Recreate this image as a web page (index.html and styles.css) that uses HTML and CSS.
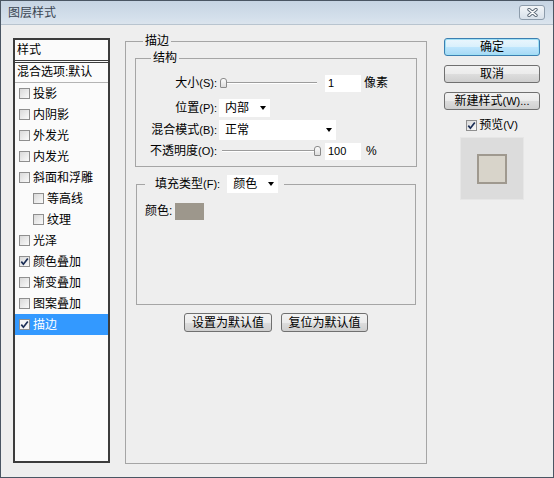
FILE: index.html
```html
<!DOCTYPE html>
<html lang="zh-CN">
<head>
<meta charset="utf-8">
<title>图层样式</title>
<link rel="stylesheet" href="styles.css">
</head>
<body>
<div class="window">
  <div class="titlebar">
    <span class="title">图层样式</span>
    <div class="close">
      <svg width="11" height="9" viewBox="0 0 11 9"><path d="M2 1.5 L9 7.5 M9 1.5 L2 7.5" stroke="#5b6876" stroke-width="3.4" stroke-linecap="round"/><path d="M2 1.5 L9 7.5 M9 1.5 L2 7.5" stroke="#ffffff" stroke-width="1.6" stroke-linecap="round"/></svg>
    </div>
  </div>
  <div class="client">
    <div class="stylelist">
      <div class="list-head">样式</div>
      <div class="list-body">
        <div class="blend-row">混合选项:默认</div>
        <div class="item"><span class="cb"></span>投影</div>
        <div class="item"><span class="cb"></span>内阴影</div>
        <div class="item"><span class="cb"></span>外发光</div>
        <div class="item"><span class="cb"></span>内发光</div>
        <div class="item"><span class="cb"></span>斜面和浮雕</div>
        <div class="item sub"><span class="cb"></span>等高线</div>
        <div class="item sub"><span class="cb"></span>纹理</div>
        <div class="item"><span class="cb"></span>光泽</div>
        <div class="item"><span class="cb"><svg width="9" height="9" viewBox="0 0 9 9"><path d="M1.3 4.6 L3.4 7.2 L7.8 1.4" stroke="#1c2f57" stroke-width="1.7" fill="none"/></svg></span>颜色叠加</div>
        <div class="item"><span class="cb"></span>渐变叠加</div>
        <div class="item"><span class="cb"></span>图案叠加</div>
        <div class="item selected"><span class="cb white"><svg width="9" height="9" viewBox="0 0 9 9"><path d="M1.3 4.6 L3.4 7.2 L7.8 1.4" stroke="#1c2f57" stroke-width="1.7" fill="none"/></svg></span>描边</div>
      </div>
    </div>

    <fieldset class="group main">
      <legend>描边</legend>
      <fieldset class="group struct">
        <legend>结构</legend>
        <div class="frow">
          <span class="flabel">大小<span class="lat">(S):</span></span>
          <div class="slider"><span class="thumb"></span></div>
          <div class="num">1</div>
          <span class="unit">像素</span>
        </div>
        <div class="frow r2">
          <span class="flabel">位置<span class="lat">(P):</span></span>
          <div class="select w51"><span>内部</span><span class="arrow"></span></div>
        </div>
        <div class="frow r3">
          <span class="flabel">混合模式<span class="lat">(B):</span></span>
          <div class="select w117 tall"><span>正常</span><span class="arrow"></span></div>
        </div>
        <div class="frow r4">
          <span class="flabel">不透明度<span class="lat">(O):</span></span>
          <div class="slider full"><span class="thumb"></span></div>
          <div class="num">100</div>
          <span class="unit pct">%</span>
        </div>
      </fieldset>
      <fieldset class="group fill">
        <legend><span>填充类型<span class="lat">(F):</span></span><div class="select w51 in-legend"><span>颜色</span><span class="arrow"></span></div></legend>
        <div class="fill-body"><span class="color-label">颜色:</span><span class="swatch"></span></div>
      </fieldset>
      <div class="defaults">
        <button class="btn w88">设置为默认值</button>
        <button class="btn w87">复位为默认值</button>
      </div>
    </fieldset>

    <div class="actions">
      <button class="btn act default">确定</button>
      <button class="btn act">取消</button>
      <button class="btn act">新建样式<span class="lat">(W)...</span></button>
      <div class="preview-row"><span class="cb"><svg width="9" height="9" viewBox="0 0 9 9"><path d="M1.3 4.6 L3.4 7.2 L7.8 1.4" stroke="#1c2f57" stroke-width="1.7" fill="none"/></svg></span>预览<span class="lat">(V)</span></div>
      <div class="preview"><div class="preview-square"></div></div>
    </div>
  </div>
</div>
</body>
</html>
```

FILE: styles.css
```css
html, body {
  margin: 0;
  padding: 0;
}
body {
  font-family: "Liberation Sans", "Noto Sans CJK SC", sans-serif;
  font-size: 12px;
  line-height: 14px;
  color: #000;
}
.lat {
  font-size: 11px;
}
.window {
  width: 554px;
  height: 478px;
  box-sizing: border-box;
  border: 1px solid #4a5663;
  display: flex;
  flex-direction: column;
  background: #eeeeee;
}
.titlebar {
  height: 23px;
  flex: none;
  display: flex;
  align-items: center;
  justify-content: space-between;
  padding: 0 8px 0 7px;
  background: linear-gradient(#c6d4e3, #d3dfeb 70%, #dbe4ed);
}
.title {
  color: #3a4552;
}
.close {
  width: 26px;
  height: 15px;
  box-sizing: border-box;
  border: 1px solid #8d9cab;
  border-radius: 3px;
  background: linear-gradient(#f2f5f8, #d8e1ea);
  display: flex;
  align-items: center;
  justify-content: center;
}
.client {
  flex: 1;
  display: flex;
  border-top: 1px solid #b8c4cf;
  padding: 9px 0 13px 12px;
}

/* left style list */
.stylelist {
  width: 97px;
  flex: none;
  box-sizing: border-box;
  margin: 4px 15px 1px 0;
  border: 2px solid #3c3c3c;
  background: #fbfbfb;
  display: flex;
  flex-direction: column;
}
.list-head {
  height: 20px;
  line-height: 20px;
  padding-left: 2px;
  border-bottom: 1px solid #3c3c3c;
}
.list-body {
  flex: 1;
  margin-top: 1px;
  border-top: 1px solid #3c3c3c;
}
.blend-row {
  height: 19px;
  line-height: 19px;
  padding-left: 2px;
  border-bottom: 1px solid #b4b4b4;
}
.item {
  height: 21px;
  display: flex;
  align-items: center;
  padding-left: 4px;
}
.item.sub {
  padding-left: 18px;
}
.item.selected {
  background: #3399ff;
  color: #fff;
}
.cb {
  width: 11px;
  height: 11px;
  flex: none;
  box-sizing: border-box;
  border: 1px solid #8f8f8f;
  background: linear-gradient(135deg, #d9d9d9, #fafafa);
  margin-right: 3px;
  display: flex;
  align-items: center;
  justify-content: center;
}
.cb.white {
  background: #f4f4f4;
}

/* group boxes */
.group {
  margin: 0;
  min-width: 0;
  border: 1px solid #a5a5a5;
}
.group > legend {
  padding: 0 2px;
  line-height: 14px;
}
.main {
  width: 302px;
  flex: none;
  box-sizing: border-box;
  padding: 3px 9px 0 9px;
  margin-right: 17px;
}
.main > legend {
  margin-left: 8px;
}
.struct {
  padding: 9px 9px 6px 10px;
}
.struct > legend {
  margin-left: 5px;
}
.frow {
  display: flex;
  align-items: center;
  height: 18px;
}
.r2 { margin-top: 7px; }
.r3 { margin-top: 3px; height: 20px; }
.r4 { margin-top: 2px; }
.flabel {
  width: 71px;
  flex: none;
  text-align: right;
}
.slider {
  width: 101px;
  height: 12px;
  margin-left: 3px;
  display: flex;
  align-items: center;
  background:
    linear-gradient(#9c9c9c, #9c9c9c) no-repeat 2px 5px / 95px 1px,
    linear-gradient(#ffffff, #ffffff) no-repeat 2px 6px / 95px 1px;
}
.slider.full {
  justify-content: flex-end;
}
.thumb {
  width: 7px;
  height: 10px;
  box-sizing: border-box;
  border: 1px solid #8a8a8a;
  border-radius: 3px 3px 1px 1px;
  background: linear-gradient(#fdfdfd, #dcdcdc);
}
.num {
  width: 36px;
  height: 17px;
  box-sizing: border-box;
  margin-left: 4px;
  padding-left: 3px;
  background: #fff;
  font-size: 11px;
  line-height: 17px;
}
.unit {
  margin-left: 3px;
}
.unit.pct {
  margin-left: 5px;
}
.select {
  height: 18px;
  box-sizing: border-box;
  margin-left: 2px;
  padding-left: 6px;
  background: #fff;
  display: flex;
  align-items: center;
}
.select.tall {
  height: 20px;
}
.w51 { width: 51px; }
.w117 { width: 117px; }
.arrow {
  margin-left: auto;
  margin-right: 4px;
  width: 0;
  height: 0;
  border-left: 3.5px solid transparent;
  border-right: 3.5px solid transparent;
  border-top: 4px solid #000;
}
.fill {
  margin: 8px 1px 0 1px;
  padding: 0 8px;
}
.fill > legend {
  display: flex;
  align-items: center;
  padding: 0 6px 0 10px;
}
.select.in-legend {
  margin-left: 7px;
}
.fill-body {
  height: 111px;
  box-sizing: border-box;
  padding-top: 10px;
  display: flex;
  align-items: flex-start;
}
.color-label {
  line-height: 17px;
}
.swatch {
  width: 29px;
  height: 17px;
  margin-left: 3px;
  background: #9d978c;
}
.defaults {
  display: flex;
  justify-content: center;
  gap: 9px;
  margin-top: 8px;
}
.btn {
  font: inherit;
  font-size: 12px;
  color: #000;
  height: 19px;
  padding: 0;
  box-sizing: border-box;
  border: 1px solid #707070;
  border-radius: 3px;
  background: linear-gradient(#f2f2f2 0%, #ebebeb 50%, #dddddd 51%, #cfcfcf 100%);
}
.w88 { width: 88px; }
.w87 { width: 87px; }

/* right column */
.actions {
  width: 96px;
  flex: none;
  align-self: flex-start;
  margin-top: 4px;
  display: flex;
  flex-direction: column;
}
.btn.act {
  height: 18px;
  width: 96px;
  margin-bottom: 9px;
}
.btn.default {
  border-color: #3c7fb1;
  background: linear-gradient(#eaf6fd 0%, #d9f0fc 50%, #bee6fd 51%, #a7d9f5 100%);
  box-shadow: inset 0 0 0 1px #9fe0f5;
}
.preview-row {
  margin-top: -1px;
  height: 14px;
  display: flex;
  align-items: center;
  justify-content: center;
}
.preview-row .cb {
  margin-right: 2px;
}
.preview {
  margin-top: 5px;
  align-self: center;
  width: 64px;
  height: 63px;
  box-sizing: border-box;
  border: 1px solid #e6e6e6;
  background: #dcdcdc;
  display: flex;
  align-items: center;
  justify-content: center;
}
.preview-square {
  width: 30px;
  height: 30px;
  box-sizing: border-box;
  border: 2px solid #9f998f;
  background: #d8d4ca;
}
```
